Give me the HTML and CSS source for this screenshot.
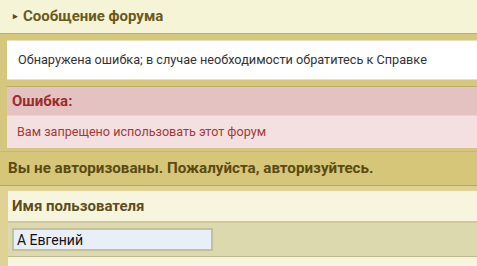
FILE: index.html
```
<!DOCTYPE html>
<html>
<head>
  <title>Сообщение форума</title>
  <link rel="stylesheet" href="styles.css">
</head>
<body>
  <div class="titlebar"><span class="arrow">&#9656;</span>Сообщение форума</div>

  <div class="content">
    <div class="notice">Обнаружена ошибка; в случае необходимости обратитесь к Справке</div>

    <div class="error">
      <div class="error-title">Ошибка:</div>
      <div class="error-text">Вам запрещено использовать этот форум</div>
    </div>
  </div>

  <div class="login">
    <div class="login-title">Вы не авторизованы. Пожалуйста, авторизуйтесь.</div>
    <div class="login-body">
      <div class="field-label">Имя пользователя</div>
      <div class="field-row">
        <input class="field-input" type="text" value="А Евгений">
      </div>
      <div class="field-end"></div>
    </div>
  </div>
</body>
</html>
```

FILE: styles.css
```
body {
  font-family: Roboto, "Liberation Sans", sans-serif;
  margin: 0;
  background: #d6c77f;
}

.titlebar {
  height: 33px;
  line-height: 33px;
  padding-left: 13px;
  background: #f6f4d7;
  color: #6b581c;
  font-size: 15px;
  font-weight: bold;
  border-bottom: 1px solid #bfae62;
}

.arrow {
  display: inline-block;
  width: 10px;
  font-size: 9px;
  color: #5a4a18;
  vertical-align: 2px;
}

.content {
  padding: 6px 0 0 7px;
  background: #d6c77f;
}

.notice {
  height: 38px;
  line-height: 38px;
  padding-left: 11px;
  background: #fff;
  color: #333;
  font-size: 12.7px;
  border-top: 1px solid #e9e2b8;
  border-bottom: 1px solid #e9e2b8;
}

.error {
  margin-top: 6px;
  border-top: 1px solid #bfae62;
}

.error-title {
  height: 28px;
  line-height: 28px;
  padding-left: 5px;
  background: #e5c2c2;
  color: #9a2c2c;
  font-size: 15px;
  font-weight: bold;
}

.error-text {
  height: 32px;
  line-height: 32px;
  padding-left: 10px;
  background: #f4e0e0;
  color: #a03a3a;
  font-size: 12.6px;
  border-top: 1px solid #ead0d0;
}

.login {
  margin-top: 3px;
  border-top: 1px solid #c9b96d;
}

.login-title {
  height: 33px;
  line-height: 33px;
  padding-left: 8px;
  background: #d5c67a;
  color: #5b4a12;
  font-size: 15.2px;
  font-weight: bold;
  border-bottom: 1px solid #b8a655;
}

.login-body {
  padding: 5px 0 0 8px;
  background: #dfd294;
}

.field-label {
  height: 30px;
  line-height: 30px;
  padding-left: 4px;
  background: #f7f5dd;
  color: #5e4d1c;
  font-size: 15px;
  font-weight: bold;
  border-bottom: 2px solid #cfc79c;
}

.field-row {
  height: 34px;
  padding: 5px 0 0 4px;
  box-sizing: border-box;
  background: #dcd9ae;
  border-bottom: 1px solid #bdb88e;
}

.field-input {
  width: 201px;
  height: 23px;
  box-sizing: border-box;
  margin: 0;
  padding: 0 3px;
  border: 2px solid #c4c09c;
  background: #e9eff9;
  color: #111;
  font-family: Roboto, "Liberation Sans", sans-serif;
  font-size: 14px;
}

.field-end {
  height: 10px;
  background: #f7f5dd;
}
```
